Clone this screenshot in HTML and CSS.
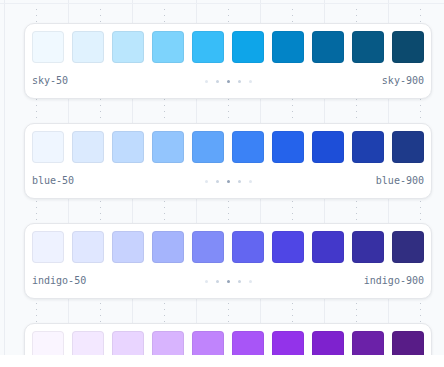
FILE: index.html
```html
<!DOCTYPE html>
<html lang="en">

<head>
    <meta charset="UTF-8" />
    <meta name="viewport" content="width=device-width, initial-scale=1.0" />
    <title>Colour scales</title>
    <link rel="stylesheet" href="styles.css">
</head>

<body>
    <div class="canvas">
        <div class="card sky">
            <div class="swatches">
                <div class="swatch"></div><div class="swatch"></div><div class="swatch"></div><div class="swatch"></div><div class="swatch"></div>
                <div class="swatch"></div><div class="swatch"></div><div class="swatch"></div><div class="swatch"></div><div class="swatch"></div>
            </div>
            <div class="labels">
                <span class="name">sky-50</span>
                <div class="dots"><i></i><i></i><i></i><i></i><i></i></div>
                <span class="name end">sky-900</span>
            </div>
        </div>

        <div class="card blue">
            <div class="swatches">
                <div class="swatch"></div><div class="swatch"></div><div class="swatch"></div><div class="swatch"></div><div class="swatch"></div>
                <div class="swatch"></div><div class="swatch"></div><div class="swatch"></div><div class="swatch"></div><div class="swatch"></div>
            </div>
            <div class="labels">
                <span class="name">blue-50</span>
                <div class="dots"><i></i><i></i><i></i><i></i><i></i></div>
                <span class="name end">blue-900</span>
            </div>
        </div>

        <div class="card indigo">
            <div class="swatches">
                <div class="swatch"></div><div class="swatch"></div><div class="swatch"></div><div class="swatch"></div><div class="swatch"></div>
                <div class="swatch"></div><div class="swatch"></div><div class="swatch"></div><div class="swatch"></div><div class="swatch"></div>
            </div>
            <div class="labels">
                <span class="name">indigo-50</span>
                <div class="dots"><i></i><i></i><i></i><i></i><i></i></div>
                <span class="name end">indigo-900</span>
            </div>
        </div>

        <div class="card purple">
            <div class="swatches">
                <div class="swatch"></div><div class="swatch"></div><div class="swatch"></div><div class="swatch"></div><div class="swatch"></div>
                <div class="swatch"></div><div class="swatch"></div><div class="swatch"></div><div class="swatch"></div><div class="swatch"></div>
            </div>
            <div class="labels">
                <span class="name">purple-50</span>
                <div class="dots"><i></i><i></i><i></i><i></i><i></i></div>
                <span class="name end">purple-900</span>
            </div>
        </div>
    </div>
</body>

</html>
```

FILE: styles.css
```css
body {
    margin: 0;
    padding: 0;
    background: #ffffff;
    font-family: "DejaVu Sans Mono", monospace;
}

/* Grid backdrop */
.canvas {
    height: 355px;
    overflow: hidden;
    box-sizing: border-box;
    padding: 23px 0 0 24px;
    display: flex;
    flex-direction: column;
    gap: 24px;
    background-color: #f8fafc;
    background-image:
        linear-gradient(to bottom, transparent 3px, #eceff4 3px, #eceff4 4px, transparent 4px),
        conic-gradient(at 1px 1px, transparent 270deg, #c3c9d2 270deg),
        linear-gradient(to right, #eaedf2 1px, transparent 1px);
    background-size: 100% 100%, 64px 6px, 64px 100%;
    background-position: 0 0, 36px 3px, 4px 0;
    background-repeat: no-repeat, repeat, repeat-x;
}

.card {
    width: 408px;
    box-sizing: border-box;
    flex-shrink: 0;
    padding: 7px 7px 9px;
    background: #ffffff;
    border: 1px solid #e5e7eb;
    border-radius: 10px;
    box-shadow: 0 1px 3px rgba(15, 23, 42, 0.08);
}

.swatches {
    display: grid;
    grid-template-columns: repeat(10, 32px);
    gap: 8px;
}

.swatch {
    height: 32px;
    border-radius: 4px;
    box-shadow: inset 0 0 0 1px rgba(15, 23, 42, 0.06);
}

.labels {
    display: grid;
    grid-template-columns: 1fr auto 1fr;
    align-items: center;
    margin-top: 10px;
    height: 16px;
}

.name {
    font-size: 10px;
    line-height: 16px;
    color: #64748b;
}

.name.end {
    text-align: right;
}

.dots {
    display: flex;
    gap: 8px;
}

.dots i {
    width: 3px;
    height: 3px;
    border-radius: 50%;
    background: #e2e8f0;
}

.dots i:nth-child(2),
.dots i:nth-child(4) {
    background: #cbd5e1;
}

.dots i:nth-child(3) {
    background: #94a3b8;
}

/* Palettes */
.sky .swatch:nth-child(1) { background: #f0f9ff; }
.sky .swatch:nth-child(2) { background: #e0f2fe; }
.sky .swatch:nth-child(3) { background: #bae6fd; }
.sky .swatch:nth-child(4) { background: #7dd3fc; }
.sky .swatch:nth-child(5) { background: #38bdf8; }
.sky .swatch:nth-child(6) { background: #0ea5e9; }
.sky .swatch:nth-child(7) { background: #0284c7; }
.sky .swatch:nth-child(8) { background: #0369a1; }
.sky .swatch:nth-child(9) { background: #075985; }
.sky .swatch:nth-child(10) { background: #0c4a6e; }

.blue .swatch:nth-child(1) { background: #eff6ff; }
.blue .swatch:nth-child(2) { background: #dbeafe; }
.blue .swatch:nth-child(3) { background: #bfdbfe; }
.blue .swatch:nth-child(4) { background: #93c5fd; }
.blue .swatch:nth-child(5) { background: #60a5fa; }
.blue .swatch:nth-child(6) { background: #3b82f6; }
.blue .swatch:nth-child(7) { background: #2563eb; }
.blue .swatch:nth-child(8) { background: #1d4ed8; }
.blue .swatch:nth-child(9) { background: #1e40af; }
.blue .swatch:nth-child(10) { background: #1e3a8a; }

.indigo .swatch:nth-child(1) { background: #eef2ff; }
.indigo .swatch:nth-child(2) { background: #e0e7ff; }
.indigo .swatch:nth-child(3) { background: #c7d2fe; }
.indigo .swatch:nth-child(4) { background: #a5b4fc; }
.indigo .swatch:nth-child(5) { background: #818cf8; }
.indigo .swatch:nth-child(6) { background: #6366f1; }
.indigo .swatch:nth-child(7) { background: #4f46e5; }
.indigo .swatch:nth-child(8) { background: #4338ca; }
.indigo .swatch:nth-child(9) { background: #3730a3; }
.indigo .swatch:nth-child(10) { background: #312e81; }

.purple .swatch:nth-child(1) { background: #faf5ff; }
.purple .swatch:nth-child(2) { background: #f3e8ff; }
.purple .swatch:nth-child(3) { background: #e9d5ff; }
.purple .swatch:nth-child(4) { background: #d8b4fe; }
.purple .swatch:nth-child(5) { background: #c084fc; }
.purple .swatch:nth-child(6) { background: #a855f7; }
.purple .swatch:nth-child(7) { background: #9333ea; }
.purple .swatch:nth-child(8) { background: #7e22ce; }
.purple .swatch:nth-child(9) { background: #6b21a8; }
.purple .swatch:nth-child(10) { background: #581c87; }
```
